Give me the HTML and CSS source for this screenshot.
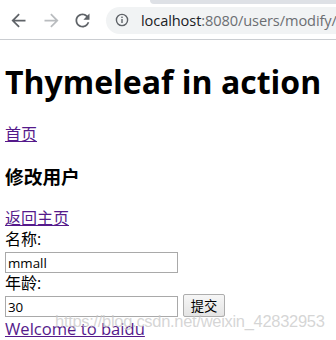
FILE: index.html
```html
<!DOCTYPE html>
<html lang="zh-CN">
<head>
<meta charset="utf-8">
<title>Thymeleaf in action</title>
<link rel="stylesheet" href="styles.css">
</head>
<body>
<div class="chrome">
  <div class="tabstrip"></div>
  <div class="toolbar">
    <svg class="nav back" width="21" height="21" viewBox="0 0 24 24"><path d="M20 11H7.83l5.59-5.59L12 4l-8 8 8 8 1.41-1.41L7.83 13H20v-2z"/></svg>
    <svg class="nav fwd" width="21" height="21" viewBox="0 0 24 24"><path d="M4 11h12.17l-5.59-5.59L12 4l8 8-8 8-1.41-1.41L16.17 13H4v-2z"/></svg>
    <svg class="nav reload" width="21" height="21" viewBox="0 0 24 24"><path d="M17.650 6.35C16.2 4.9 14.21 4 12 4c-4.42 0-7.99 3.58-7.990 8s3.57 8 7.990 8c3.73 0 6.84-2.55 7.73-6h-2.080c-.82 2.33-3.04 4-5.650 4-3.31 0-6-2.69-6-6s2.69-6 6-6c1.66 0 3.14.69 4.22 1.78L13 11h7V4l-2.350 2.350z"/></svg>
    <div class="omnibox">
      <svg class="info" width="14" height="14" viewBox="0 0 14 14"><circle cx="7" cy="7" r="5.6" fill="none" stroke="#5f6368" stroke-width="1.4"/><rect x="6.3" y="6" width="1.4" height="4" fill="#5f6368"/><rect x="6.3" y="3.6" width="1.4" height="1.4" fill="#5f6368"/></svg>
      <span class="url"><span class="host">localhost</span>:8080/users/modify/</span>
    </div>
  </div>
</div>
<div class="page">
  <h1 class="title">Thymeleaf in action</h1>
  <div class="line"><a href="#">首页</a></div>
  <h3 class="subtitle">修改用户</h3>
  <div class="line"><a href="#">返回主页</a></div>
  <div class="line">名称:</div>
  <div class="field-row first"><input class="field" type="text" value="mmall"></div>
  <div class="line">年龄:</div>
  <div class="field-row second"><input class="field" type="text" value="30"><button class="submit" type="button">提交</button></div>
  <div class="line"><a class="latin" href="#">Welcome to baidu</a></div>
  <div class="watermark">https://blog.csdn.net/weixin_42832953</div>
</div>
</body>
</html>
```
FILE: styles.css
```css
html, body {
  margin: 0;
  padding: 0;
  background: #fff;
}
body {
  font-family: "Open Sans", "Noto Sans CJK SC", sans-serif;
  font-size: 16px;
  color: #000;
  overflow: hidden;
}
.chrome {
  position: relative;
  height: 39px;
  border-bottom: 1px solid #cacdd1;
  background: #fff;
}
.tabstrip {
  position: absolute;
  left: 150px;
  right: 0;
  top: 0;
  height: 4px;
  background: #dee1e6;
  border-bottom-left-radius: 6px;
}
.toolbar {
  display: flex;
  align-items: center;
  height: 39px;
  padding-left: 8px;
  padding-top: 2px;
  box-sizing: border-box;
}
.nav {
  flex: none;
  fill: #5f6368;
}
.nav.fwd {
  margin-left: 12px;
  fill: #b9bcbf;
}
.nav.reload {
  margin-left: 10px;
}
.omnibox {
  flex: 1 1 auto;
  min-width: 0;
  margin-left: 13px;
  height: 27px;
  margin-top: -1px;
  border-radius: 14px 0 0 14px;
  background: #f1f3f4;
  display: flex;
  align-items: center;
  padding-left: 9px;
  box-sizing: border-box;
  overflow: hidden;
}
.info {
  flex: none;
}
.url {
  margin-left: 12px;
  font-family: "Open Sans", sans-serif;
  font-size: 14.6px;
  color: #6b6e72;
  white-space: nowrap;
  letter-spacing: -0.1px;
}
.host {
  color: #202124;
}
.page {
  position: relative;
  padding-left: 5px;
}
.title {
  margin: 21px 0 21px;
  font-size: 32px;
  line-height: 42px;
  font-weight: bold;
  white-space: nowrap;
}
.line {
  height: 21px;
  line-height: 21px;
  white-space: nowrap;
}
a {
  color: #551a8b;
  text-decoration: underline;
}
a.latin {
  font-size: 16.6px;
}
.subtitle {
  margin: 19px 0 19px;
  font-size: 18.72px;
  line-height: 25px;
  font-weight: bold;
}
.field-row {
  display: flex;
  align-items: flex-end;
}
.field-row.first {
  height: 23px;
  padding-top: 2px;
  box-sizing: border-box;
}
.field-row.second {
  height: 24px;
}
.field-row.second .field {
  margin-bottom: 1px;
}
.field {
  width: 173px;
  height: 21px;
  box-sizing: border-box;
  border: 1px solid #a9a9a9;
  padding: 0 2px;
  margin: 0;
  font-family: "Open Sans", "Noto Sans CJK SC", sans-serif;
  font-size: 13.33px;
  color: #000;
  background: #fff;
}
.submit {
  margin: 0 0 1px 5px;
  width: 42px;
  height: 23px;
  box-sizing: border-box;
  border: 1px solid #adadad;
  border-radius: 2px;
  background: linear-gradient(#f6f6f6, #e4e4e4);
  font-family: "Noto Sans CJK SC", sans-serif;
  font-size: 13.33px;
  color: #000;
  padding: 0;
}
.watermark {
  position: absolute;
  left: 55px;
  bottom: 8px;
  font-family: "Liberation Sans", sans-serif;
  font-size: 16.5px;
  letter-spacing: -0.3px;
  color: rgba(200, 200, 200, 0.75);
  white-space: nowrap;
  pointer-events: none;
}
```
